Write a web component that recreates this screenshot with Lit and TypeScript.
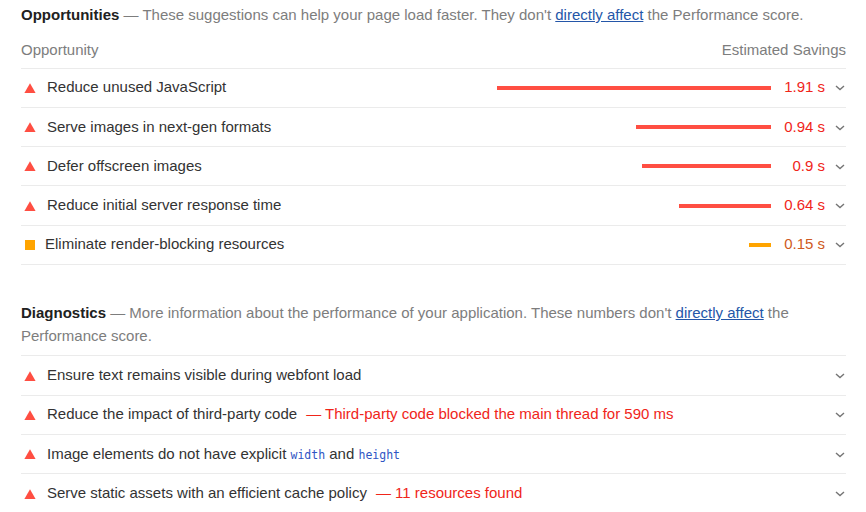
import { LitElement, html, css } from "lit";
import { customElement } from "lit/decorators.js";

const fail = html`<svg class="ic" viewBox="0 0 12 12"><path d="M6 1.2 11.6 11H.4z" fill="#ff4e42"/></svg>`;
const avg = html`<span class="sq"></span>`;
const chev = html`<svg class="chev" viewBox="0 0 10 6"><path d="M1 1l4 3.6L9 1" fill="none" stroke="#757575" stroke-width="1.4"/></svg>`;

const opps = [
  { t: "Reduce unused JavaScript", w: 274, v: "1.91 s", c: "red" },
  { t: "Serve images in next-gen formats", w: 135, v: "0.94 s", c: "red" },
  { t: "Defer offscreen images", w: 129, v: "0.9 s", c: "red" },
  { t: "Reduce initial server response time", w: 92, v: "0.64 s", c: "red" },
  { t: "Eliminate render-blocking resources", w: 22, v: "0.15 s", c: "org" },
];

@customElement("app-root")
export class AppRoot extends LitElement {
  static styles = css`
    :host { display: block; width: 866px; height: 512px; overflow: hidden; background: #fff;
      font-family: "Liberation Sans", Arial, sans-serif; font-size: 15px; color: #333; }
    .wrap { padding: 3px 20px 0 21px; display: flex; flex-direction: column; }
    .desc { margin: 0; line-height: 23px; color: #7d7d7d; }
    .desc b { color: #212121; font-weight: 700; }
    .desc a { color: #2456a8; text-decoration: underline; }
    .head { display: flex; justify-content: space-between; align-items: center; height: 41.6px; padding-top: 5px; box-sizing: border-box; color: #7d7d7d; }
    .row { display: flex; align-items: center; height: 39.3px; padding-bottom: 2px; box-sizing: border-box; border-top: 1px solid #ebebeb; }
    .row.last { border-bottom: 1px solid #ebebeb; height: 40.3px; }
    .ic { width: 12px; height: 12px; margin: 2px 11px 0 3px; flex: none; }
    .sq { width: 10px; height: 10px; margin: 2px 10.5px 0 3.5px; background: #ffa400; flex: none; }
    .title { flex: none; white-space: nowrap; }
    .disp { margin-left: 9px; color: #f0251a; white-space: nowrap; }
    .spacer { flex: 1; }
    .bar { height: 4px; margin-top: 2px; background: #ff4e42; flex: none; }
    .bar.org { background: #ffa400; }
    .val { width: 54px; text-align: right; flex: none; white-space: nowrap; }
    .val.red { color: #f0251a; }
    .val.org { color: #cf5a22; }
    .chev { width: 10px; height: 6px; margin: 3px 1px 0 10px; flex: none; }
    code { font-family: "DejaVu Sans Mono", monospace; font-size: 11.5px; color: #2f55c4; }
    .gap { height: 36.4px; flex: none; }
    .dh { padding-bottom: 8px; }
  `;

  render() {
    return html`<div class="wrap">
      <p class="desc"><b>Opportunities</b> — These suggestions can help your page load faster. They don't <a href="#">directly affect</a> the Performance score.</p>
      <div class="head"><span>Opportunity</span><span>Estimated Savings</span></div>
      ${opps.map(
        (o, i) => html`<div class="row ${i === opps.length - 1 ? "last" : ""}">
          ${o.c === "red" ? fail : avg}
          <span class="title">${o.t}</span>
          <span class="spacer"></span>
          <span class="bar ${o.c}" style="width:${o.w}px"></span>
          <span class="val ${o.c}">${o.v}</span>
          ${chev}
        </div>`
      )}
      <div class="gap"></div>
      <p class="desc dh"><b>Diagnostics</b> — More information about the performance of your application. These numbers don't <a href="#">directly affect</a> the Performance score.</p>
      <div class="row">${fail}<span class="title">Ensure text remains visible during webfont load</span><span class="spacer"></span>${chev}</div>
      <div class="row">${fail}<span class="title">Reduce the impact of third-party code</span><span class="disp">— Third-party code blocked the main thread for 590 ms</span><span class="spacer"></span>${chev}</div>
      <div class="row">${fail}<span class="title">Image elements do not have explicit <code>width</code> and <code>height</code></span><span class="spacer"></span>${chev}</div>
      <div class="row">${fail}<span class="title">Serve static assets with an efficient cache policy</span><span class="disp">— 11 resources found</span><span class="spacer"></span>${chev}</div>
    </div>`;
  }
}
